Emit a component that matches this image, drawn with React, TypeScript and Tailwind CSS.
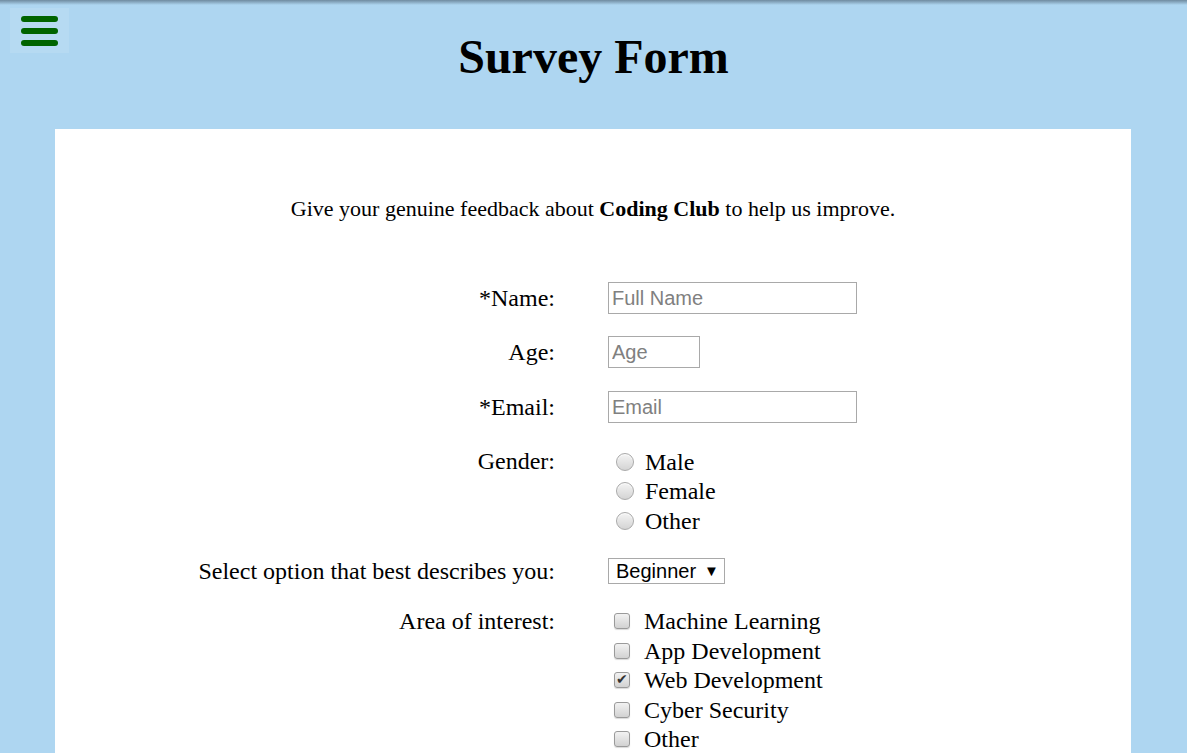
import React from 'react';

const serif = { fontFamily: '"Liberation Serif", "Times New Roman", serif' };
const sans = { fontFamily: '"Liberation Sans", Arial, sans-serif' };

function Radio({ label }: { label: string }) {
  return (
    <div className="flex items-center h-[29.5px]">
      <span className="w-[18px] h-[18px] ml-[8px] rounded-full border border-[#a9a9a9] bg-gradient-to-b from-[#f4f4f4] to-[#d4d4d4] shadow-[inset_0_1px_1px_rgba(255,255,255,0.8)]" />
      <span className="ml-[11px]">{label}</span>
    </div>
  );
}

function Check({ label, checked }: { label: string; checked?: boolean }) {
  return (
    <div className="flex items-center h-[29.5px]">
      <span className="w-[16px] h-[16px] ml-[6px] rounded-[3px] border border-[#9a9a9a] bg-gradient-to-b from-[#f2f2f2] to-[#d2d2d2] shadow-[0_1px_1px_rgba(0,0,0,0.15)] flex items-center justify-center text-[14px] leading-none text-[#333]">
        {checked ? '✔' : ''}
      </span>
      <span className="ml-[14px]">{label}</span>
    </div>
  );
}

export default function App() {
  return (
    <div className="min-h-screen bg-[#aed6f1] relative" style={serif}>
      <div className="absolute inset-x-0 top-0 h-[5px] bg-gradient-to-b from-[#6f8ba0] to-[#aed6f1]" />
      <button className="absolute left-[10px] top-[8px] w-[59px] h-[45px] bg-white/10 flex flex-col items-start pl-[11px] justify-center gap-[6px]">
        <span className="block w-[37px] h-[6px] rounded-full bg-[#006400]" />
        <span className="block w-[37px] h-[6px] rounded-full bg-[#006400]" />
        <span className="block w-[37px] h-[6px] rounded-full bg-[#006400]" />
      </button>

      <header className="h-[129px] pt-[27px] text-center">
        <h1 className="text-[48px] font-bold leading-[60px] text-black">Survey Form</h1>
      </header>

      <main className="mx-[55px] w-[1076px] bg-white pt-[68px] pb-[40px] text-black">
        <p className="text-center text-[22px] leading-[24px]">
          Give your genuine feedback about <b>Coding Club</b> to help us improve.
        </p>

        <div className="mt-[61px] grid grid-cols-[500px_1fr] gap-x-[53px] text-[24px]">
          <label className="text-right leading-[32px]">*Name:</label>
          <input
            placeholder="Full Name"
            className="w-[249px] h-[32px] border border-[#a9a9a9] px-[3px] text-[20px] placeholder:text-[#808080] outline-none"
            style={sans}
          />

          <label className="text-right leading-[32px] mt-[22px]">Age:</label>
          <input
            placeholder="Age"
            className="w-[92px] h-[32px] mt-[22px] border border-[#a9a9a9] px-[3px] text-[20px] placeholder:text-[#808080] outline-none"
            style={sans}
          />

          <label className="text-right leading-[32px] mt-[23px]">*Email:</label>
          <input
            placeholder="Email"
            className="w-[249px] h-[32px] mt-[23px] border border-[#a9a9a9] px-[3px] text-[20px] placeholder:text-[#808080] outline-none"
            style={sans}
          />

          <label className="text-right leading-[29.5px] mt-[24px]">Gender:</label>
          <div className="mt-[24px] flex flex-col">
            <Radio label="Male" />
            <Radio label="Female" />
            <Radio label="Other" />
          </div>

          <label className="text-right leading-[26px] mt-[22px]">Select option that best describes you:</label>
          <div className="mt-[22px]">
            <div
              className="w-[117px] h-[26px] border border-[#a9a9a9] flex items-center pl-[7px] text-[20px] leading-none"
              style={sans}
            >
              Beginner<span className="ml-[8px] text-[15px]">▼</span>
            </div>
          </div>

          <label className="text-right leading-[29.5px] mt-[23px]">Area of interest:</label>
          <div className="mt-[23px] flex flex-col">
            <Check label="Machine Learning" />
            <Check label="App Development" />
            <Check label="Web Development" checked />
            <Check label="Cyber Security" />
            <Check label="Other" />
          </div>
        </div>
      </main>
    </div>
  );
}
